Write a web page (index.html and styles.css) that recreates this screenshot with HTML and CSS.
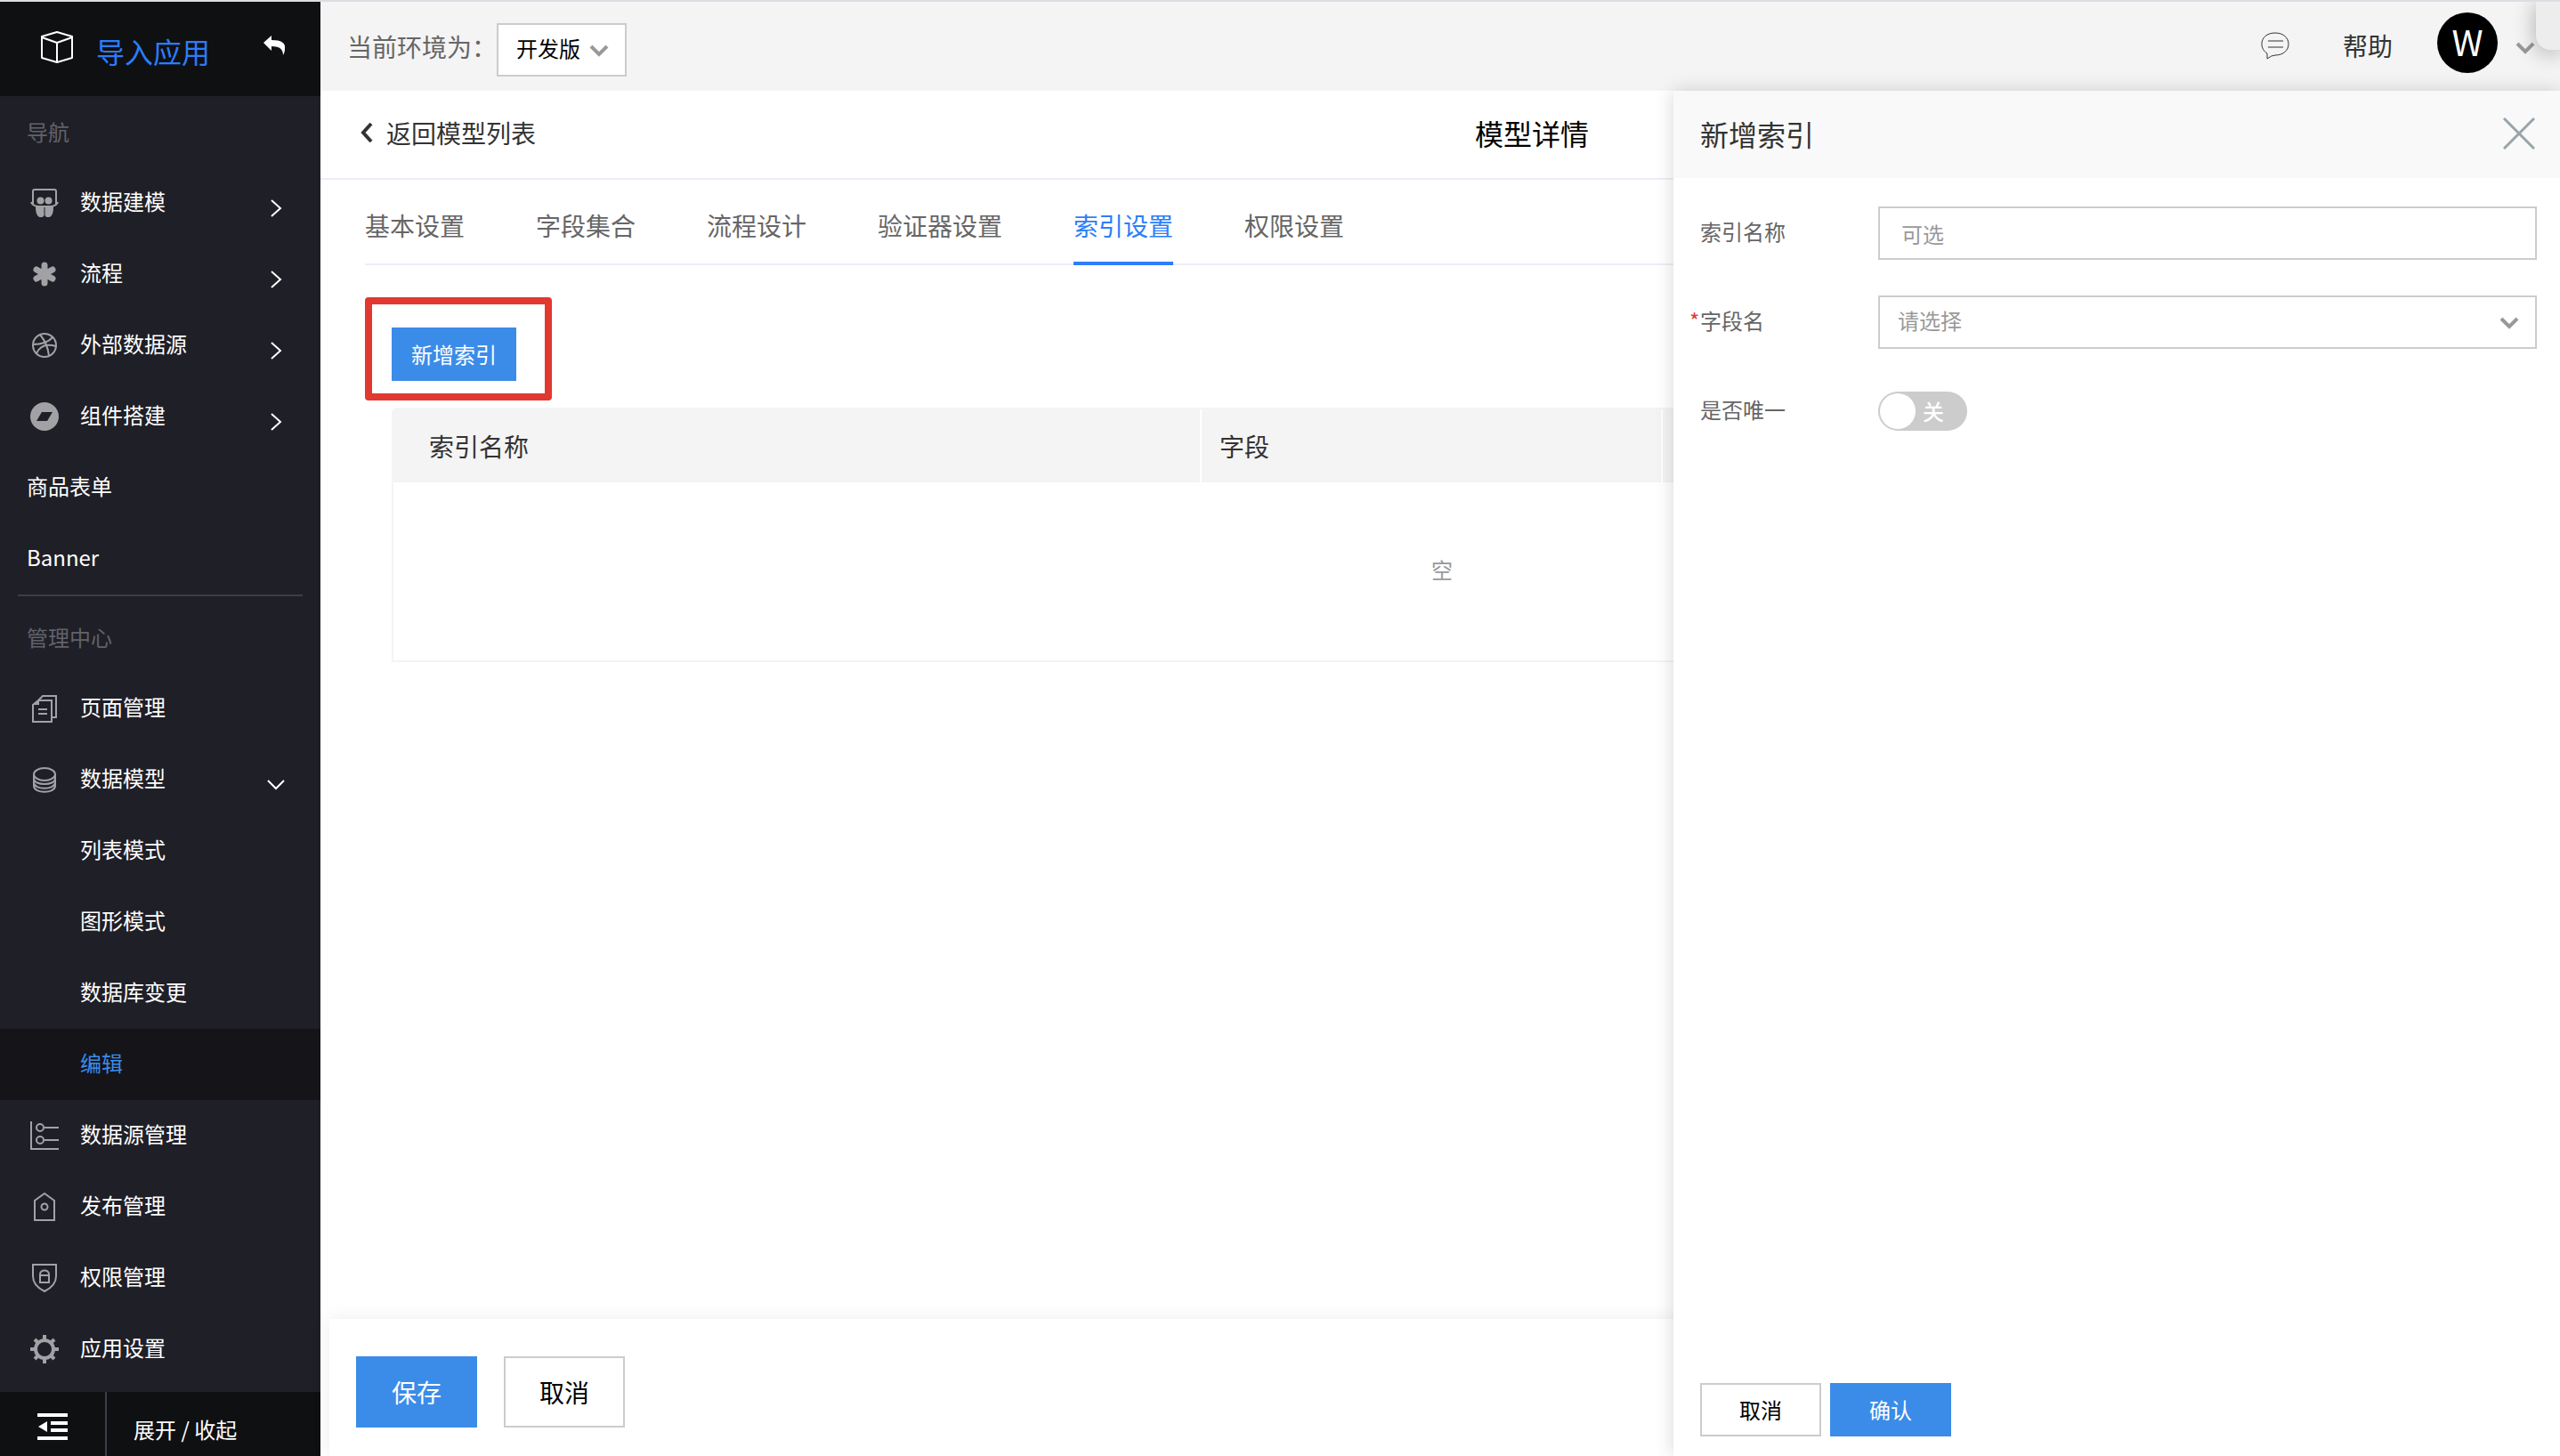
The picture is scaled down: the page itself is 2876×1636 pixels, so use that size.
FILE: index.html
```html
<!DOCTYPE html>
<html lang="zh-CN">

<head>
    <meta charset="UTF-8">
    <meta name="viewport" content="width=device-width, initial-scale=1.0">
    <title>模型详情</title>
    <link rel="stylesheet" href="styles.css">
</head>

<body>
    <!-- 左侧导航 -->
    <aside class="sidebar">
        <div class="sidebar-header">
            <svg class="logo" viewBox="0 0 36 36" width="36" height="36">
                <path d="M18 1 L35 6 V30 L18 35 L1 30 V6 Z M1 7 L18 13 L35 7 M18 13 V35" />
            </svg>
            <span class="app-name">导入应用</span>
            <button class="back-app" type="button" aria-label="返回">
                <svg viewBox="0 0 26 24" width="26" height="24">
                    <path d="M9 0 V5 C20 5 25 8 24 15 C24 18 23 20 22 22 C22 16 19 12 9 12 V17 L0 8 Z" />
                </svg>
            </button>
        </div>

        <nav class="nav">
            <div class="nav-label">导航</div>
            <a class="nav-item" href="#">
                <svg class="icon" viewBox="0 0 32 32">
                    <path class="line" d="M3 17 V3 Q3 1 5 1 H27 Q29 1 29 3 V17 M1 15 Q2 19 9 20 H23 Q30 19 31 15" />
                    <circle class="fill" cx="11.500" cy="13.500" r="4" />
                    <circle class="fill" cx="20.500" cy="13.500" r="4" />
                    <path class="fill" d="M6 19 H15.500 V30 C14 33 10 33 8 30 C6 27 6 23 6 19 Z M16.500 19 H26 C26 23 26 27 24 30 C22 33 18 33 16.500 30 Z" />
                </svg>
                <span>数据建模</span>
                <svg class="arrow" viewBox="0 0 20 20"><path d="M5 1 L15 10 L5 19" /></svg>
            </a>
            <a class="nav-item" href="#">
                <svg class="icon" viewBox="0 0 32 32">
                    <path class="star" d="M16 6 V26 M7 11 L25 21 M25 11 L7 21" />
                </svg>
                <span>流程</span>
                <svg class="arrow" viewBox="0 0 20 20"><path d="M5 1 L15 10 L5 19" /></svg>
            </a>
            <a class="nav-item" href="#">
                <svg class="icon" viewBox="0 0 32 32">
                    <circle class="line" cx="16" cy="16" r="13" />
                    <path class="line" d="M11 4 C16 10 20 18 21 28 M3 15 C12 15 20 13 25 7 M7 25 C11 16 19 14 29 17" />
                </svg>
                <span>外部数据源</span>
                <svg class="arrow" viewBox="0 0 20 20"><path d="M5 1 L15 10 L5 19" /></svg>
            </a>
            <a class="nav-item" href="#">
                <svg class="icon" viewBox="0 0 32 32">
                    <path class="fill" fill-rule="evenodd" d="M16 0 A16 16 0 1 1 16 32 A16 16 0 1 1 16 0 Z M13 11 L7 21 H19 L25 11 Z" />
                </svg>
                <span>组件搭建</span>
                <svg class="arrow" viewBox="0 0 20 20"><path d="M5 1 L15 10 L5 19" /></svg>
            </a>
            <a class="nav-item" href="#"><span>商品表单</span></a>
            <a class="nav-item" href="#"><span>Banner</span></a>
            <hr class="nav-line">
            <div class="nav-label second">管理中心</div>
            <a class="nav-item" href="#">
                <svg class="icon" viewBox="0 0 32 32">
                    <path class="line" d="M3 12 L9 7 H24 V31 H3 Z M9 7 L14 2 H29 V26 H24 M9 17 H19 M9 22 H19" />
                    <path class="fill" d="M3 12 L10 6 V12 Z" />
                </svg>
                <span>页面管理</span>
            </a>
            <a class="nav-item" href="#">
                <svg class="icon" viewBox="0 0 32 32">
                    <ellipse class="line" cx="16" cy="10" rx="12" ry="7" />
                    <path class="line" d="M4 10 V23 C4 32 28 32 28 23 V10 M4 15 C4 23 28 23 28 15 M4 19 C4 28 28 28 28 19" />
                </svg>
                <span>数据模型</span>
                <svg class="arrow" viewBox="0 0 20 20"><path d="M1 5 L10 14 L19 5" /></svg>
            </a>
            <a class="nav-item sub" href="#"><span>列表模式</span></a>
            <a class="nav-item sub" href="#"><span>图形模式</span></a>
            <a class="nav-item sub" href="#"><span>数据库变更</span></a>
            <a class="nav-item sub active" href="#"><span>编辑</span></a>
            <a class="nav-item" href="#">
                <svg class="icon" viewBox="0 0 32 32">
                    <path class="line" d="M1 0 V31 H32 M16 7 H32 M16 21 H32" />
                    <circle class="line" cx="11" cy="7" r="4" />
                    <circle class="line" cx="11" cy="21" r="4" />
                </svg>
                <span>数据源管理</span>
            </a>
            <a class="nav-item" href="#">
                <svg class="icon" viewBox="0 0 32 32">
                    <path class="line" d="M16 1 L27 9 V31 H5 V9 Z" />
                    <circle class="line" cx="16" cy="16" r="3.500" />
                </svg>
                <span>发布管理</span>
            </a>
            <a class="nav-item" href="#">
                <svg class="icon" viewBox="0 0 32 32">
                    <path class="line" d="M3 1 H29 V14 C29 22 24 27 16 31 C8 27 3 22 3 14 Z M11 13 H21 V21 H11 Z M11 13 V12 C11 6 21 6 21 12 V13" />
                </svg>
                <span>权限管理</span>
            </a>
            <a class="nav-item" href="#">
                <svg class="icon" viewBox="0 0 32 32">
                    <circle class="gear" cx="16" cy="16" r="10" />
                    <path class="gear" d="M16 0 V6 M16 26 V32 M0 16 H6 M26 16 H32 M5 5 L9 9 M23 23 L27 27 M27 5 L23 9 M5 27 L9 23" />
                </svg>
                <span>应用设置</span>
            </a>
        </nav>

        <div class="sidebar-footer">
            <button class="fold" type="button" aria-label="折叠菜单">
                <svg viewBox="0 0 34 30" width="34" height="30">
                    <path d="M0 0 H34 V4 H0 Z M15 9 H34 V13 H15 Z M15 17 H34 V21 H15 Z M0 26 H34 V30 H0 Z M1 15 L11 9 V21 Z" />
                </svg>
            </button>
            <span class="fold-text">展开 / 收起</span>
        </div>
    </aside>

    <main class="main">
        <!-- 顶部栏 -->
        <header class="topbar">
            <label for="env">当前环境为：</label>
            <div class="env-select">
                <select id="env">
                    <option>开发版</option>
                </select>
                <svg class="down" viewBox="0 0 22 14"><path d="M2 2 L11 11 L20 2" /></svg>
            </div>
            <div class="user-area">
                <svg class="message" viewBox="0 0 32 32">
                    <path d="M7 24 C-3 18 -1 1 16 1 C36 1 36 26 16 26 Q12 26 7 30 Z M8 10 H25 M8 17 H25" />
                </svg>
                <a class="help" href="#">帮助</a>
                <span class="avatar">W</span>
                <svg class="down" viewBox="0 0 22 14"><path d="M2 2 L11 11 L20 2" /></svg>
            </div>
        </header>

        <div class="page-header">
            <a class="back" href="#">
                <svg viewBox="0 0 16 24" width="16" height="24"><path d="M13 2 L4 12 L13 22" /></svg>
                返回模型列表
            </a>
            <h1>模型详情</h1>
            <span></span>
        </div>

        <div class="content">
            <nav class="tabs">
                <a href="#">基本设置</a>
                <a href="#">字段集合</a>
                <a href="#">流程设计</a>
                <a href="#">验证器设置</a>
                <a class="active" href="#">索引设置</a>
                <a href="#">权限设置</a>
            </nav>
            <div class="highlight">
                <button class="btn primary" type="button">新增索引</button>
            </div>
            <div class="table-box">
                <table>
                    <thead>
                        <tr>
                            <th class="col-name">索引名称</th>
                            <th class="col-field">字段</th>
                            <th></th>
                        </tr>
                    </thead>
                    <tbody>
                        <tr>
                            <td colspan="3">空</td>
                        </tr>
                    </tbody>
                </table>
            </div>
        </div>

        <div class="page-footer">
            <button class="btn large primary" type="button">保存</button>
            <button class="btn large" type="button">取消</button>
        </div>
    </main>

    <!-- 新增索引抽屉 -->
    <section class="drawer">
        <div class="drawer-header">
            <h2>新增索引</h2>
            <button class="close" type="button" aria-label="关闭">
                <svg viewBox="0 0 36 36" width="36" height="36"><path d="M1 1 L35 35 M35 1 L1 35" /></svg>
            </button>
        </div>
        <form class="drawer-form">
            <div class="row">
                <label for="index-name">索引名称</label>
                <input class="text" id="index-name" type="text" placeholder="可选">
            </div>
            <div class="row required">
                <label for="field-name">字段名</label>
                <div class="field-select">
                    <select id="field-name">
                        <option>请选择</option>
                    </select>
                    <svg class="down" viewBox="0 0 22 14"><path d="M2 2 L11 11 L20 2" /></svg>
                </div>
            </div>
            <div class="row">
                <label for="unique">是否唯一</label>
                <div class="switch">
                    <input id="unique" type="checkbox">
                    <span>关</span>
                </div>
            </div>
        </form>
        <div class="drawer-footer">
            <button class="btn" type="button">取消</button>
            <button class="btn primary" type="button">确认</button>
        </div>
    </section>

    <div class="corner"></div>
</body>

</html>
```
FILE: styles.css
```css
/* 全局样式 */
* {
    box-sizing: border-box;
}

body {
    margin: 0;
    min-height: 100vh;
    display: flex;
    position: relative;
    overflow: hidden;
    border-top: 2px solid #dcdce2;
    font-family: "Noto Sans CJK SC", sans-serif;
    font-size: 24px;
    line-height: 36px;
    color: #333;
    background: #fff;
}

a {
    color: inherit;
    text-decoration: none;
}

button,
input,
select {
    font: inherit;
    color: inherit;
    border-radius: 0;
}

svg {
    display: block;
    flex: none;
    fill: none;
}

h1,
h2 {
    margin: 0;
    font-size: 32px;
    line-height: 48px;
    font-weight: normal;
}

/* 左侧导航 */
.sidebar {
    flex: none;
    width: 360px;
    display: flex;
    flex-direction: column;
    color: #fff;
    background: #1f1f27;
}

.sidebar-header {
    height: 106px;
    padding: 0 38px 0 46px;
    display: flex;
    align-items: center;
    background: #0f1012;
}

.logo {
    margin-bottom: 4px;
    stroke: #fff;
    stroke-width: 2;
    stroke-linejoin: round;
}

.app-name {
    margin-left: 26px;
    padding-top: 4px;
    font-size: 32px;
    line-height: 48px;
    color: #2b7dfb;
}

.back-app {
    margin-left: auto;
    padding: 0 0 6px;
    border: none;
    background: none;
}

.back-app path,
.fold path {
    fill: #fff;
}

.nav {
    flex: 1;
}

.nav-label {
    padding: 22px 30px;
    color: #62626a;
}

.nav-label.second {
    padding: 28px 30px 22px;
}

.nav-item {
    height: 80px;
    padding: 0 40px 0 30px;
    display: flex;
    align-items: center;
}

.nav-item span {
    padding-bottom: 4px;
}

.nav-item.sub {
    padding-left: 90px;
}

.nav-item.active {
    color: #3b8ce8;
    background: #141419;
}

.nav-line {
    margin: 0 20px;
    border: none;
    border-top: 2px solid #3d3c4a;
}

.icon {
    width: 32px;
    height: 32px;
    margin: 0 24px 0 4px;
}

.icon .line {
    stroke: #a2a2a6;
    stroke-width: 2;
}

.icon .fill {
    fill: #a2a2a6;
}

.icon .star {
    stroke: #a2a2a6;
    stroke-width: 7;
    stroke-linecap: round;
}

.icon .gear {
    stroke: #a2a2a6;
    stroke-width: 4;
}

.arrow {
    width: 20px;
    height: 20px;
    margin: 12px 0 0 auto;
    stroke: #fff;
    stroke-width: 2;
}

.sidebar-footer {
    height: 72px;
    display: flex;
    background: #0f1012;
}

.fold {
    width: 120px;
    padding: 6px 0 0 42px;
    border: none;
    border-right: 2px solid #3d3c4a;
    background: none;
}

.fold-text {
    padding: 24px 0 0 30px;
}

/* 主区域 */
.main {
    flex: 1;
    min-width: 0;
    display: flex;
    flex-direction: column;
}

.topbar {
    height: 100px;
    padding: 0 28px 0 30px;
    display: flex;
    align-items: center;
    font-size: 28px;
    line-height: 42px;
    background: #f4f4f4;
}

.topbar label {
    width: 168px;
    color: #666;
}

.env-select {
    width: 146px;
    margin-top: 8px;
}

.env-select,
.field-select {
    height: 60px;
    position: relative;
    background: #fff;
}

.env-select select,
.field-select select {
    appearance: none;
    width: 100%;
    height: 100%;
    padding: 0 20px 4px;
    border: 2px solid #ccc;
    background: none;
    font-size: 24px;
}

.env-select select {
    color: #000;
}

.down {
    width: 22px;
    height: 14px;
    stroke: #999;
    stroke-width: 4;
}

.env-select .down,
.field-select .down {
    position: absolute;
    top: 24px;
    right: 20px;
}

.user-area {
    margin-left: auto;
    display: flex;
    align-items: center;
}

.message {
    width: 32px;
    height: 32px;
    stroke: #333;
    stroke-width: 1;
}

.help {
    margin: 0 50px 0 60px;
    padding-bottom: 2px;
}

.avatar {
    width: 68px;
    height: 68px;
    margin: 0 20px 8px 0;
    border-radius: 50%;
    font-size: 40px;
    line-height: 64px;
    text-align: center;
    color: #fff;
    background: #000;
}

.user-area .down {
    margin-top: 4px;
}

.page-header {
    padding: 23px 36px 27px 44px;
    display: flex;
    align-items: center;
    justify-content: space-between;
    border-bottom: 2px solid #ebeef5;
}

.page-header h1 {
    color: #000;
}

.back {
    display: flex;
    align-items: center;
    gap: 14px;
    font-size: 28px;
    line-height: 42px;
}

.back svg {
    stroke: #333;
    stroke-width: 4;
}

.content {
    flex: 1;
    padding: 0 76px 0 50px;
}

.tabs {
    display: flex;
    gap: 80px;
    font-size: 28px;
    line-height: 42px;
    color: #666;
    border-bottom: 2px solid #ebeef5;
}

.tabs a {
    padding: 30px 0 20px;
    margin-bottom: -2px;
    border-bottom: 4px solid transparent;
}

.tabs .active {
    color: #2d7ef8;
    border-color: #2d7ef8;
}

.highlight {
    width: 210px;
    margin-top: 36px;
    padding: 26px 22px 14px;
    border: 8px solid #e1382f;
    border-radius: 4px;
}

.highlight .btn {
    width: 140px;
}

.table-box {
    margin: 8px 0 0 30px;
    border: 2px solid #f4f4f4;
    border-radius: 6px 6px 0 0;
}

table {
    width: 100%;
    table-layout: fixed;
    border-collapse: separate;
    border-spacing: 0;
}

th {
    height: 82px;
    padding: 0 20px;
    font-size: 28px;
    font-weight: normal;
    text-align: left;
    background: #f4f4f4;
    border-right: 2px solid #fff;
}

th:last-child {
    border-right: none;
}

.col-name {
    width: 908px;
    padding-left: 40px;
}

.col-field {
    width: 518px;
}

td {
    height: 200px;
    padding: 0 0 4px;
    text-align: center;
    color: #999;
}

.page-footer {
    margin-left: 10px;
    padding: 42px 30px 32px;
    display: flex;
    gap: 30px;
    background: #fff;
    box-shadow: 0 0 20px rgba(0, 0, 0, 0.08);
}

/* 按钮 */
.btn {
    width: 136px;
    height: 60px;
    padding: 0;
    border: 2px solid #ccc;
    color: #000;
    background: #fff;
}

.btn.large {
    height: 80px;
    font-size: 28px;
}

.btn.primary {
    border-color: #3b8ce8;
    color: #fff;
    background: #3b8ce8;
}

/* 抽屉 */
.drawer {
    position: absolute;
    top: 100px;
    right: 0;
    bottom: 0;
    width: 996px;
    display: flex;
    flex-direction: column;
    background: #fff;
    box-shadow: 0 0 20px rgba(0, 0, 0, 0.16);
}

.drawer-header {
    height: 98px;
    padding: 0 28px 2px 30px;
    display: flex;
    align-items: center;
    justify-content: space-between;
    background: #f9f9f9;
}

.close {
    padding: 0;
    border: none;
    background: none;
}

.close path {
    stroke: #98a4ab;
    stroke-width: 3;
}

.drawer-form {
    flex: 1;
    padding: 32px 26px 0 30px;
    color: #666;
}

.row {
    height: 60px;
    margin-bottom: 40px;
    display: flex;
    align-items: center;
}

.row label {
    width: 200px;
    padding-bottom: 4px;
}

.required label::before {
    content: "*";
    width: 12px;
    margin-left: -12px;
    display: inline-block;
    color: #e03a3a;
}

.text,
.field-select {
    flex: 1;
}

.text {
    height: 60px;
    padding: 0 24px;
    border: 2px solid #ccc;
}

.text::placeholder,
.field-select select {
    color: #999;
    opacity: 1;
}

.switch {
    position: relative;
    width: 100px;
    height: 44px;
    display: flex;
    align-items: center;
}

.switch input {
    appearance: none;
    width: 100%;
    height: 100%;
    margin: 0;
    padding: 2px;
    border-radius: 22px;
    background: #ccc;
}

.switch input::before {
    content: "";
    display: block;
    width: 40px;
    height: 40px;
    border-radius: 50%;
    background: #fff;
}

.switch span {
    position: absolute;
    left: 50px;
    font-weight: 500;
    color: #fff;
}

.drawer-footer {
    padding: 0 30px 22px;
    display: flex;
    gap: 10px;
}

/* 右上角浮层 */
.corner {
    position: absolute;
    top: -2px;
    right: 0;
    width: 27px;
    height: 56px;
    border-radius: 0 0 0 16px;
    background: #ededed;
    box-shadow: 0 4px 24px rgba(0, 0, 0, 0.3);
}
```
